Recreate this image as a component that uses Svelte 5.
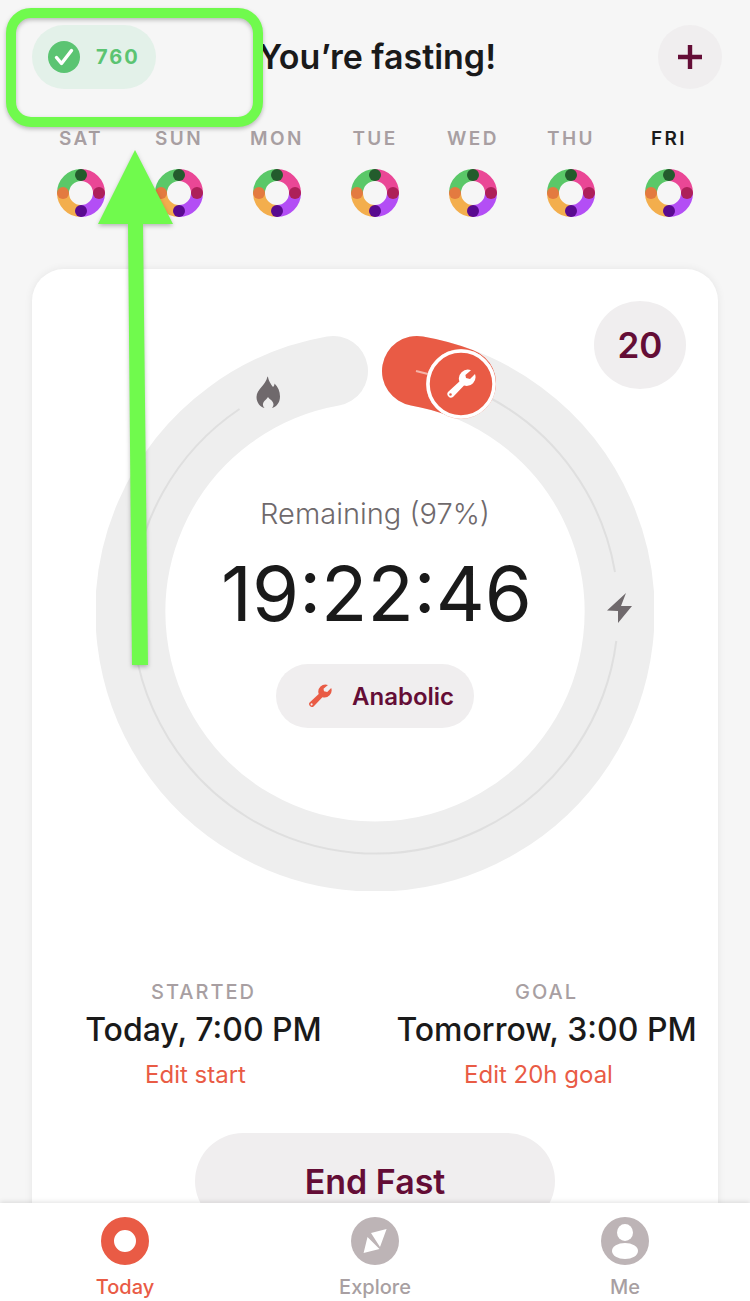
<script>
  const days = ['SAT', 'SUN', 'MON', 'TUE', 'WED', 'THU', 'FRI'];
  const segs = [
    { c: '#ea4796', d: 'M24 6A18 18 0 0 1 42 24' },
    { c: '#b34ef5', d: 'M42 24A18 18 0 0 1 24 42' },
    { c: '#f3ae4d', d: 'M24 42A18 18 0 0 1 6 24' },
    { c: '#5ac868', d: 'M6 24A18 18 0 0 1 24 6' }
  ];
  const dots = [
    { x: 24, y: 6, c: '#235c2c' },
    { x: 42, y: 24, c: '#ad2059' },
    { x: 24, y: 42, c: '#590a8f' },
    { x: 6, y: 24, c: '#e37a40' }
  ];
  const stats = [
    { label: 'STARTED', value: 'Today, 7:00 PM', edit: 'Edit start' },
    { label: 'GOAL', value: 'Tomorrow, 3:00 PM', edit: 'Edit 20h goal' }
  ];
</script>

{#snippet wrench(cls)}
  <svg class={cls} viewBox="0 0 30 30" aria-hidden="true">
    <path fill="currentColor" fill-rule="evenodd" d="M25 1.2A9 9 0 0 0 13.4 12.6L2 23A3.6 3.6 0 0 0 7 28L18 16.6A9 9 0 0 0 29 5L24 10L20 9L19.4 6ZM4.5 24.2a1.3 1.3 0 1 0 0 2.6a1.3 1.3 0 1 0 0-2.6Z" />
  </svg>
{/snippet}

<div class="screen">
  <header class="top">
    <div class="pill">
      <svg class="check" viewBox="0 0 32 32" aria-hidden="true">
        <circle cx="16" cy="16" r="16" fill="#5bc472" />
        <path d="M8.5 16.5l5 6L23.5 9.5" fill="none" stroke="#fff" stroke-width="3.4" stroke-linecap="round" stroke-linejoin="round" />
      </svg>
      <span>760</span>
    </div>
    <h1>You’re fasting!</h1>
    <button class="plus" aria-label="Add">
      <svg viewBox="0 0 24 24" aria-hidden="true"><path d="M9.8 0h4.4v9.8H24v4.4h-9.8V24H9.8v-9.8H0V9.8h9.8Z" fill="#640d36" /></svg>
    </button>
  </header>

  <div class="week">
    {#each days as day, i}
      <div class="day">
        <span class="dname" class:today={i === 6}>{day}</span>
        <svg class="donut" viewBox="0 0 48 48" aria-hidden="true">
          {#each segs as s}<path d={s.d} fill="none" stroke={s.c} stroke-width="12" />{/each}
          {#each dots as d}<circle cx={d.x} cy={d.y} r="6" fill={d.c} />{/each}
        </svg>
      </div>
    {/each}
  </div>

  <main class="card">
    <div class="count">20</div>
    <div class="dial">
      <svg class="track" viewBox="0 0 558 558" aria-hidden="true">
        <g transform="translate(-96 -333)">
          <path d="M417 371A244.6 244.6 0 1 1 333 371" fill="none" stroke="#eeeeee" stroke-width="70" stroke-linecap="round" />
          <path d="M492 399A243 243 0 0 1 615 572" fill="none" stroke="#dfdfdf" stroke-width="2" />
          <path d="M616.3 641A243 243 0 1 1 239.5 409" fill="none" stroke="#dfdfdf" stroke-width="2" />
          <path d="M417 371A244.6 244.6 0 0 1 461 383" fill="none" stroke="#e95b45" stroke-width="70" stroke-linecap="round" />
          <path d="M416 371L428 374" stroke="#f4b4a8" stroke-width="2" />
          <circle cx="461" cy="384" r="34.5" fill="#e95b45" stroke="#f6b5a9" stroke-width="1" />
          <circle cx="461" cy="384" r="33" fill="#e95b45" stroke="#fff" stroke-width="3.5" />
          <path d="M279 377c1 5 3 7 5 10 1-1 1.5-2 1.5-3.5 3.5 3.5 5.5 7.5 5.5 13 0 6.500-4 10.500-8 11.500 2-2 2-5 0-7-1-1.500-3-2-4-4-1 2-3 3-4 4.500-1.500 2-1.500 4.500.5 6.500-4-1-8-5-8-11 0-8 9-11 11-20.500Z" transform="translate(-11 0)" fill="#6f696c" />
          <path d="M626 593 607 610.500 618 611 618 623 632 606 621 606Z" fill="#6f696c" />
        </g>
      </svg>
      <div class="wr-marker">{@render wrench('wr-big')}</div>
      <div class="center">
        <p class="remain">Remaining (97%)</p>
        <p class="clock">19:22:46</p>
        <div class="chip">
          {@render wrench('wr-small')}
          <span>Anabolic</span>
        </div>
      </div>
    </div>

    <div class="stats">
      {#each stats as s}
        <div class="stat">
          <span class="slabel">{s.label}</span>
          <span class="svalue">{s.value}</span>
          <span class="sedit">{s.edit}</span>
        </div>
      {/each}
    </div>

    <button class="end">End Fast</button>
  </main>

  <nav class="tabs">
    <div class="tab active">
      <svg viewBox="0 0 48 48" aria-hidden="true"><circle cx="24" cy="24" r="17.500" fill="none" stroke="#e95b45" stroke-width="13" /></svg>
      <span>Today</span>
    </div>
    <div class="tab">
      <svg viewBox="0 0 48 48" aria-hidden="true">
        <circle cx="24" cy="24" r="24" fill="#bdb4b6" />
        <path d="M20 16 35.600 12 29 30Z M16.500 20 28.500 32 12.600 36Z" fill="#fff" />
      </svg>
      <span>Explore</span>
    </div>
    <div class="tab">
      <svg viewBox="0 0 48 48" aria-hidden="true">
        <circle cx="24" cy="24" r="24" fill="#bdb4b6" />
        <ellipse cx="24" cy="15.500" rx="8" ry="8.500" fill="#fff" />
        <ellipse cx="24" cy="34" rx="13" ry="8" fill="#fff" />
      </svg>
      <span>Me</span>
    </div>
  </nav>

  <svg class="annotation" viewBox="0 0 750 1301" aria-hidden="true">
    <rect x="11" y="13" width="247" height="109" rx="20" fill="none" stroke="#70fa4d" stroke-width="10" />
    <path d="M135 150 173 224 143 224 148 665 132 665 128 224 98 224Z" fill="#70fa4d" />
  </svg>
</div>

<style>
  :global(body) {
    margin: 0;
    background: #f6f6f6;
    font-family: Inter, "Liberation Sans", sans-serif;
  }
  .screen {
    position: relative;
    width: 750px;
    height: 1301px;
    overflow: hidden;
    display: flex;
    flex-direction: column;
    background: #f6f6f6;
    color: #1a1a1a;
  }
  .top {
    display: grid;
    grid-template-columns: 1fr auto 1fr;
    align-items: center;
    padding: 25px 28px 0 32px;
  }
  .pill {
    justify-self: start;
    width: 124px;
    height: 64px;
    box-sizing: border-box;
    padding-left: 16px;
    display: flex;
    align-items: center;
    gap: 16px;
    border-radius: 32px;
    background: #e3f1e9;
    color: #5bc472;
    font-size: 20px;
    font-weight: 700;
    letter-spacing: 2px;
  }
  .check { width: 32px; height: 32px; }
  h1 {
    margin: 0;
    font-size: 34px;
    font-weight: 600;
    line-height: 64px;
    white-space: nowrap;
  }
  .plus {
    justify-self: end;
    width: 64px;
    height: 64px;
    padding: 0;
    border: 0;
    border-radius: 50%;
    background: #f0eeef;
    display: flex;
    align-items: center;
    justify-content: center;
  }
  .plus svg { width: 24px; height: 24px; }
  .week {
    display: grid;
    grid-template-columns: repeat(7, 98px);
    padding: 38px 0 0 32px;
  }
  .day {
    display: flex;
    flex-direction: column;
    align-items: center;
    gap: 18px;
  }
  .dname {
    font-size: 19px;
    line-height: 24px;
    font-weight: 600;
    letter-spacing: 2.400px;
    color: #a89fa2;
  }
  .dname.today { color: #1a1a1a; }
  .donut { width: 48px; height: 48px; }
  .card {
    position: relative;
    flex: 1;
    min-height: 0;
    margin: 52px 32px 0;
    border-radius: 32px 32px 0 0;
    background: #fff;
    box-shadow: 0 0 8px rgba(0, 0, 0, 0.07);
    display: flex;
    flex-direction: column;
    align-items: center;
  }
  .count {
    position: absolute;
    top: 32px;
    right: 32px;
    width: 92px;
    height: 88px;
    border-radius: 50%;
    background: #f0eeef;
    color: #640d36;
    font-size: 35px;
    font-weight: 600;
    display: flex;
    align-items: center;
    justify-content: center;
  }
  .dial {
    position: relative;
    width: 558px;
    height: 558px;
    margin-top: 64px;
    flex: none;
    display: flex;
    justify-content: center;
  }
  .track {
    position: absolute;
    inset: 0;
    width: 558px;
    height: 558px;
  }
  .wr-marker {
    position: absolute;
    left: 350px;
    top: 36px;
    color: #fff;
    display: flex;
  }
  :global(.wr-big) { width: 30px; height: 30px; }
  :global(.wr-small) { width: 24px; height: 24px; color: #e95b45; }
  .center {
    position: relative;
    display: flex;
    flex-direction: column;
    align-items: center;
    padding-top: 159px;
  }
  .remain {
    margin: 0;
    font-size: 29px;
    line-height: 44px;
    font-weight: 350;
    color: #6f696c;
  }
  .clock {
    margin: 9px 0 0 3px;
    font-size: 76px;
    line-height: 96px;
    font-weight: 400;
    color: #1a1a1a;
  }
  .chip {
    margin-top: 23px;
    width: 198px;
    height: 64px;
    box-sizing: border-box;
    padding-left: 32px;
    border-radius: 32px;
    background: #f0eeef;
    display: flex;
    align-items: center;
    gap: 20px;
    color: #640d36;
    font-size: 24px;
    font-weight: 600;
  }
  .stats {
    width: 100%;
    display: grid;
    grid-template-columns: 343px 343px;
    margin-top: 89px;
  }
  .stat {
    display: flex;
    flex-direction: column;
    align-items: center;
    white-space: nowrap;
  }
  .slabel {
    font-size: 20px;
    line-height: 24px;
    font-weight: 500;
    letter-spacing: 2px;
    color: #a89fa2;
  }
  .svalue {
    margin-top: 6px;
    font-size: 32px;
    line-height: 40px;
    font-weight: 500;
  }
  .sedit {
    margin-top: 11px;
    margin-right: 16px;
    font-size: 24px;
    line-height: 28px;
    color: #e95b45;
  }
  .end {
    flex: none;
    margin-top: 44px;
    width: 360px;
    height: 96px;
    padding: 0;
    border: 0;
    border-radius: 48px;
    background: #f0eeef;
    color: #640d36;
    font: 600 34px Inter, "Liberation Sans", sans-serif;
  }
  .tabs {
    position: absolute;
    left: 0;
    right: 0;
    bottom: 0;
    height: 98px;
    background: #fff;
    box-shadow: 0 -1px 5px rgba(0, 0, 0, 0.12);
    display: grid;
    grid-template-columns: repeat(3, 250px);
  }
  .tab {
    display: flex;
    flex-direction: column;
    align-items: center;
    padding-top: 14px;
    gap: 10px;
    font-size: 20px;
    line-height: 24px;
    font-weight: 500;
    color: #a89fa2;
  }
  .tab svg { width: 48px; height: 48px; }
  .tab.active { color: #e95b45; }
  .annotation {
    position: absolute;
    inset: 0;
    width: 750px;
    height: 1301px;
    filter: drop-shadow(0 2px 2px rgba(0, 0, 0, 0.25));
    pointer-events: none;
  }
</style>
